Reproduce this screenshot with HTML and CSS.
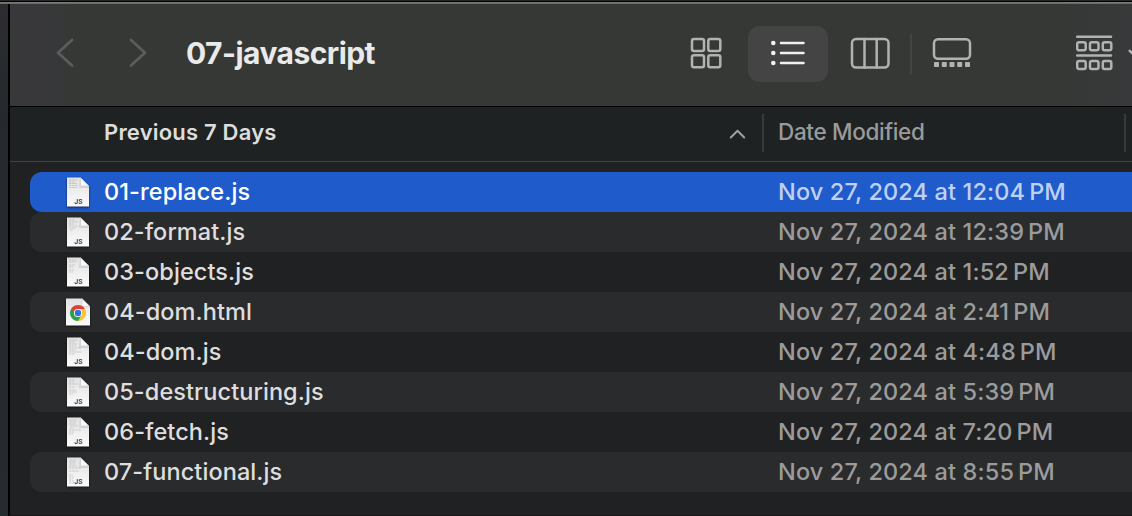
FILE: index.html
```html
<!DOCTYPE html>
<html lang="en">
<head>
<meta charset="utf-8">
<title>07-javascript</title>
<link rel="stylesheet" href="styles.css">
</head>
<body>
<svg class="defs" aria-hidden="true">
  <defs>
    <linearGradient id="paper" x1="0" y1="0" x2="0" y2="1"><stop offset="0" stop-color="#e2e2e2"/><stop offset="1" stop-color="#fbfbfb"/></linearGradient>
    <linearGradient id="fold" x1="0" y1="1" x2="1" y2="0"><stop offset="0" stop-color="#fff"/><stop offset=".5" stop-color="#f4f4f4"/><stop offset="1" stop-color="#ccc"/></linearGradient>
    <symbol id="page" viewBox="0 0 24 30">
      <path d="M1 .5H14.5L23 9V29.5H1Z" fill="url(#paper)"/>
      <path d="M14 1V9.5H23V11H13Z" fill="#000" opacity=".1"/>
      <path d="M14.5 .5L23 9H14.5Z" fill="url(#fold)" stroke="#aaa" stroke-width=".4"/>
    </symbol>
    <symbol id="chrome" viewBox="0 0 24 30">
      <path d="M0 1.5H16L24 9.500V28.500H0Z" fill="url(#paper)"/>
      <path d="M16 1.500L24 9.500H16Z" fill="url(#fold)" stroke="#aaa" stroke-width=".4"/>
      <g transform="translate(12 16)">
        <path d="M0 0L-6.930 -4A8 8 0 0 1 6.930 -4Z" fill="#e04335"/>
        <path d="M0 0L6.930 -4A8 8 0 0 1 0 8Z" fill="#fbc52d"/>
        <path d="M0 0L0 8A8 8 0 0 1 -6.930 -4Z" fill="#2da04e"/>
        <path d="M0 -4H6.930L3.460 2Z" fill="#fbc52d"/>
        <path d="M3.460 2L0 8L-3.460 2Z" fill="#2da04e"/>
        <path d="M-3.460 2L-6.930 -4H0Z" fill="#e04335"/>
        <path d="M-3.460 2L-6.930 -4L-5 -2Z" fill="#2da04e"/>
        <circle r="4.100" fill="#fff"/><circle r="3.200" fill="#2f73e0"/>
      </g>
    </symbol>
  </defs>
</svg>
<div class="screen">
  <div class="top-edge"></div>
  <div class="backdrop"></div>
  <main class="window">
    <header class="toolbar">
      <svg class="nav" width="92" height="32" viewBox="0 0 92 32"><path d="M17 3L3 15.800L17 28.500M76 3L90 15.800L76 28.500"/></svg>
      <h1 class="title">07-javascript</h1>
      <div class="views">
        <svg class="icon grid" width="32" height="32" viewBox="0 0 32 32"><rect x="2" y="2" width="12" height="12" rx="2"/><rect x="18.300" y="2" width="12" height="12" rx="2"/><rect x="2" y="18.300" width="12" height="12" rx="2"/><rect x="18.300" y="18.300" width="12" height="12" rx="2"/></svg>
        <div class="active">
          <svg class="icon list" width="36" height="28" viewBox="0 0 36 28"><path d="M11 5H33.500M11 15H33.500M11 25H33.500"/><g class="solid"><circle cx="3.300" cy="5" r="2.300"/><circle cx="3.300" cy="15" r="2.300"/><circle cx="3.300" cy="25" r="2.300"/></g></svg>
        </div>
        <svg class="icon columns" width="40" height="32" viewBox="0 0 40 32"><rect x="2" y="2" width="36.500" height="28.500" rx="4"/><path d="M14.500 2V30.500M26.700 2V30.500"/></svg>
        <i class="divider"></i>
        <svg class="icon gallery" width="40" height="32" viewBox="0 0 40 32"><rect x="2" y="2.200" width="36" height="19.500" rx="4"/><g class="solid"><rect x="2" y="25" width="5" height="5" rx=".7"/><rect x="9.800" y="25" width="5" height="5" rx=".7"/><rect x="17.500" y="25" width="5" height="5" rx=".7"/><rect x="25.200" y="25" width="5" height="5" rx=".7"/><rect x="33" y="25" width="5" height="5" rx=".7"/></g></svg>
        <svg class="icon group" width="57" height="36" viewBox="0 0 57 36"><path class="bar" d="M1.200 1.800H35M1.200 20.500H35"/><rect x="1.200" y="7.300" width="8.500" height="8" rx="1.800"/><rect x="14" y="7.300" width="8.500" height="8" rx="1.800"/><rect x="26.800" y="7.300" width="8.500" height="8" rx="1.800"/><rect x="1.200" y="26" width="8.500" height="8" rx="1.800"/><rect x="14" y="26" width="8.500" height="8" rx="1.800"/><rect x="26.800" y="26" width="8.500" height="8" rx="1.800"/><path d="M53.700 15.800L59 21"/></svg>
      </div>
    </header>
    <div class="header">
      <span class="group-name">Previous 7 Days</span>
      <svg class="sort" width="18" height="12" viewBox="0 0 18 12"><path d="M1.800 9.500L8.500 2.800L15.200 9.500"/></svg>
      <span class="date-head">Date Modified</span>
      <i class="column-end"></i>
    </div>
    <div class="files" id="files"></div>
  </main>
</div>
<script src="files.js"></script>
</body>
</html>
```
FILE: styles.css
```css
* { box-sizing: border-box; }
body { margin: 0; background: #202122; font-family: Inter, "Liberation Sans", sans-serif; overflow: hidden; }
.defs { position: absolute; width: 0; height: 0; }
.screen { width: 1132px; height: 516px; display: grid; grid-template: 4px 512px / 8px 1124px; }
.top-edge { grid-column: 1 / 3; background: linear-gradient(#25262a 0 1px, #000 1px 2px, #797d76 2px 3px, #666b65 3px); }
.backdrop { background: linear-gradient(#2d2d31, #23292c 22%, #252c2f); }
.window { border-left: 2px solid #000; border-bottom: 1px solid #191719; background: #202122; overflow: hidden; }
.toolbar { height: 103px; display: flex; align-items: flex-start; background: linear-gradient(90deg, #38383a 0, #38383a 40px, #363836 64px, #363836 1050px, #38393a 1122px); border-bottom: 1px solid #000; }
.nav { margin: 33px 0 0 45px; flex: none; fill: none; stroke: #5b5c5b; stroke-width: 2.8; stroke-linecap: round; stroke-linejoin: round; }
.title { margin: 31px 0 0 39px; width: 200px; flex: none; font-size: 30px; line-height: 36px; font-weight: 700; letter-spacing: -.55px; color: #e9eae9; white-space: nowrap; }
.views { display: flex; align-items: flex-start; margin-left: 304px; flex: none; }
.icon { flex: none; fill: none; stroke: #b1b2b1; stroke-width: 2.5; stroke-linecap: round; }
.solid { fill: #b1b2b1; stroke: none; }
.grid { margin-top: 33px; }
.active { width: 80px; height: 56px; margin: 22px 0 0 26px; padding: 12px 0 0 22px; border-radius: 12px; background: #434443; }
.list { stroke: #f1f1f1; }
.list .solid { fill: #f1f1f1; }
.columns { margin: 33px 0 0 22px; }
.divider { width: 2px; height: 40px; margin: 30px 0 0 20px; background: #434443; }
.gallery { margin: 33px 0 0 20px; }
.group { margin: 31px 0 0 103.500px; }
.header { height: 55px; display: flex; border-bottom: 1px solid #414344; background: #1f2223; }
.group-name { width: 624px; padding: 9px 0 0 94px; font-size: 22px; line-height: 32px; font-weight: 600; letter-spacing: .2px; color: #dcdddd; white-space: nowrap; }
.sort { margin: 21px 0 0 95px; fill: none; stroke: #a0a1a1; stroke-width: 2; stroke-linecap: round; stroke-linejoin: round; }
.date-head { width: 362px; height: 38px; margin: 7px 0 0 15px; padding-left: 14px; border-left: 2px solid #373a3b; font-size: 22.500px; line-height: 36px; font-weight: 500; letter-spacing: -.33px; color: #999b9b; }
.column-end { width: 2px; height: 38px; margin-top: 7px; background: #373a3b; }
.files { padding: 10px 0 0 20px; }
.row { height: 40px; display: flex; align-items: center; padding-left: 36px; border-radius: 12px 0 0 12px; color: #dededf; font-size: 23.500px; font-weight: 450; line-height: 39px; white-space: nowrap; }
.row:nth-child(even) { background: #2a2b2c; }
.row.selected { background: #1f5bcb; color: #fff; }
.file-icon { width: 24px; height: 30px; flex: none; overflow: visible; filter: drop-shadow(0 1px 1px #0009); }
.file-icon text { font-family: Inter, sans-serif; font-size: 6.800px; font-weight: 700; fill: #484848; }
.scribble { fill: none; stroke: #aeaeae; stroke-width: .6; stroke-dasharray: 2.500 .6; }
.name { width: 688px; height: 40px; padding-left: 14px; letter-spacing: .08px; }
.date { height: 40px; color: #9b9b9c; letter-spacing: .13px; }
.selected .date { color: #bfd1f2; }
.thin { display: inline-block; width: 4px; }
```
FILE: files.js
```js
const files = [
  ["01-replace.js", "12:04", "M3 3h8M3 5h6M3 6.500h8M3 8.500h9M3 10.500h8"],
  ["02-format.js", "12:39", "M3 3h6M3 5h9M3 7h5M3 9h9M3 11h7M4 13h3"],
  ["03-objects.js", "1:52", "M3 3h8M3 5h7M3 8h6M3 10h4M3 13h5M3 15h4"],
  ["04-dom.html", "2:41", null],
  ["04-dom.js", "4:48", "M3 3h8M3 5h6M3 7h8M3 9h7M3 11h12M3 13h7M3 15h13M3 17h6"],
  ["05-destructuring.js", "5:39", "M3 3h6M3 5h5M3 7h9M3 10h6M3 13h7M3 15h8M3 17h4"],
  ["06-fetch.js", "7:20", "M3 3h8M4 5h6M3 7h7M4 9h8M4 11h4M3 13h12M3 15h5M3 17h4"],
  ["07-functional.js", "8:55", "M4 3h6M3 5h7M4 7h5M3 9h8M3 11h12M3 14h10M3 18h4M3 20h5M3 22h4M3 24h5M3 26h5"]
];
document.getElementById("files").innerHTML = files.map(([name, time, lines], i) => `
  <div class="row${i === 0 ? " selected" : ""}">
    <svg class="file-icon" viewBox="0 0 24 30">${lines
      ? `<use href="#page"/><path class="scribble" d="${lines}"/><text x="8.300" y="26.500">JS</text>`
      : `<use href="#chrome"/>`}</svg>
    <span class="name"><span class="label">${name}</span></span>
    <span class="date">Nov 27, 2024 at ${time}<i class="thin"></i>PM</span>
  </div>`).join("");
```
